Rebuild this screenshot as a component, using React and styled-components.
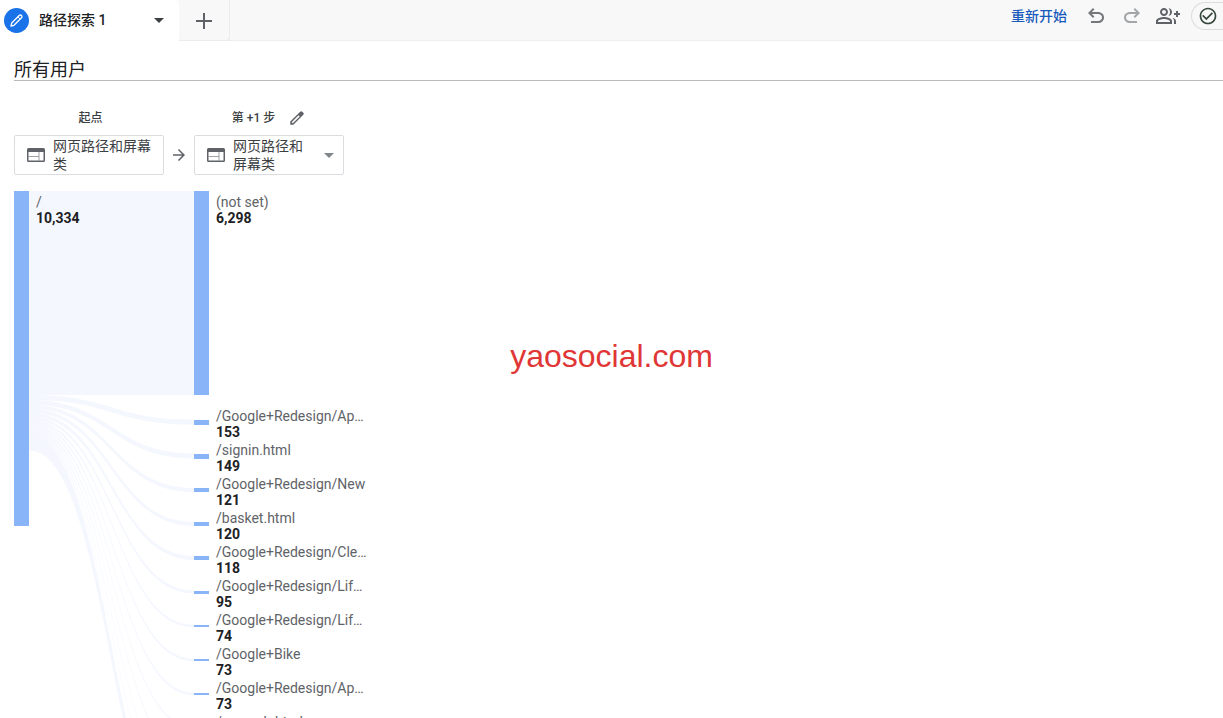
import styled, { createGlobalStyle } from 'styled-components'

const colors = {
  text: '#202124',
  secondary: '#5f6368',
  bar: '#8ab4f8',
  flow: '#f4f7fe',
  link: '#185abc',
  primary: '#1a73e8',
  border: '#dadce0',
  header: '#f8f8f9',
}

const steps = [
  { path: '/Google+Redesign/Ap…', value: 153 },
  { path: '/signin.html', value: 149 },
  { path: '/Google+Redesign/New', value: 121 },
  { path: '/basket.html', value: 120 },
  { path: '/Google+Redesign/Cle…', value: 118 },
  { path: '/Google+Redesign/Lif…', value: 95 },
  { path: '/Google+Redesign/Lif…', value: 74 },
  { path: '/Google+Bike', value: 73 },
  { path: '/Google+Redesign/Ap…', value: 73 },
  { path: '/asearch.html', value: 68 },
]

// users of the steps that follow the labelled ones, the last is the remainder
const moreSteps = [66, 64, 62, 480]

const START = 10334
const FIRST = 6298
const PX_PER_USER = 204 / FIRST
const ROW = 34
const GAP = 10
const LINK_WIDTH = 165

const GlobalStyle = createGlobalStyle`
  * {
    box-sizing: border-box;
  }
  body {
    margin: 0;
    background: #ffffff;
    color: ${colors.text};
    font-family: Roboto, 'Noto Sans CJK SC', sans-serif;
    font-size: 14px;
  }
`

const Page = styled.div`
  position: relative;
  display: flex;
  flex-direction: column;
  height: 100vh;
  overflow: hidden;
`

const BaseButton = styled.button`
  display: flex;
  align-items: center;
  padding: 0;
  border: none;
  background: none;
  color: inherit;
  font: inherit;
  cursor: pointer;
`

const Header = styled.header`
  display: flex;
  flex: none;
  height: 41px;
  background: ${colors.header};
  border-bottom: 1px solid #eeeeef;
`

const Tab = styled(BaseButton)`
  width: 179px;
  height: 41px;
  padding: 0 15px 0 4px;
  background: #ffffff;
  border-radius: 0 4px 0 0;
`

const TabBadge = styled.span`
  display: flex;
  align-items: center;
  justify-content: center;
  width: 25px;
  height: 25px;
  margin-right: 10px;
  border-radius: 50%;
  background: ${colors.primary};
`

const TabName = styled.span`
  flex: 1;
  padding-bottom: 3px;
  text-align: left;
  font-weight: 500;
`

const AddTab = styled(BaseButton)`
  justify-content: center;
  width: 51px;
  height: 41px;
  border-radius: 0 0 4px 4px;
  box-shadow: inset -1px -1px 0 #ececee;
`

const Actions = styled.div`
  display: flex;
  align-items: center;
  gap: 12px;
  height: 32px;
  margin-left: auto;
`

const Restart = styled(BaseButton)`
  margin-right: 5px;
  padding-bottom: 2px;
  color: ${colors.link};
  font-weight: 500;
`

const IconButton = styled(BaseButton)`
  justify-content: center;
  width: 24px;
  height: 24px;
`

const Status = styled(BaseButton)`
  width: 32px;
  height: 28px;
  margin-left: -1px;
  padding-left: 6px;
  border: 1px solid ${colors.border};
  border-right: none;
  border-radius: 14px 0 0 14px;
`

const Segment = styled.h1`
  flex: none;
  margin: 18px 0 0 14px;
  border-bottom: 1px solid #b9b9b9;
  font-size: 18px;
  font-weight: 400;
  line-height: 21px;
`

const Steps = styled.div`
  display: grid;
  flex: none;
  grid-template-columns: 150px 30px 150px;
  grid-template-rows: 24px 40px;
  row-gap: 5px;
  align-items: center;
  justify-items: center;
  margin: 25px 0 16px 14px;
`

const StepTitle = styled.div`
  display: flex;
  gap: 10px;
  grid-column: ${({ $column }) => $column};
  height: 24px;
  padding-left: 3px;
  color: #3c4043;
  font-size: 12px;
  font-weight: 500;
  line-height: 24px;
`

const StepSelect = styled(BaseButton)`
  gap: 8px;
  width: 150px;
  height: 40px;
  padding: 0 9px 0 12px;
  border: 1px solid ${colors.border};
  border-radius: 2px;
  text-align: left;
  line-height: 18px;
`

const StepName = styled.span`
  flex: 1;
  padding-right: ${({ $open }) => ($open ? '8px' : '0')};
  color: #3c4043;
`

const Chart = styled.section`
  display: flex;
  flex: 1;
  align-items: flex-start;
  min-height: 0;
  margin-left: 14px;
  overflow: hidden;
`

const Bar = styled.div`
  flex: none;
  width: 15px;
  background: ${colors.bar};
`

const Links = styled.div`
  position: relative;
  flex: none;
  width: ${LINK_WIDTH}px;
`

const StartLabel = styled.div`
  position: absolute;
  top: 3px;
  left: 7px;
`

const Nodes = styled.ul`
  display: flex;
  flex-direction: column;
  flex: 1;
  margin: 0;
  padding: 0;
  list-style: none;
`

const Node = styled.li`
  display: flex;
  flex: none;
  align-items: center;
  gap: 7px;
  height: ${ROW}px;
`

const FirstNode = styled(Node)`
  align-items: flex-start;
  height: auto;
  margin-bottom: ${GAP}px;
`

const Label = styled.div`
  padding-top: 3px;
`

const Path = styled.div`
  color: ${colors.secondary};
  line-height: 16px;
  white-space: nowrap;
`

const Value = styled.div`
  font-weight: 700;
  line-height: 16px;
`

const Watermark = styled.div`
  position: absolute;
  top: 50%;
  left: 50%;
  padding-bottom: 6px;
  transform: translate(-50%, -50%);
  color: #e03636;
  font-family: 'Liberation Sans', Arial, sans-serif;
  font-size: 32px;
  line-height: 36px;
`

function Icon({ size = 24, color = colors.secondary, children }) {
  return (
    <svg width={size} height={size} viewBox="0 0 24 24" fill={color} aria-hidden="true">
      {children}
    </svg>
  )
}

function Caret({ color }) {
  return (
    <svg width="10" height="5" viewBox="0 0 10 5" fill={color} aria-hidden="true">
      <path d="M0 0h10L5 5z" />
    </svg>
  )
}

function EditIcon() {
  return (
    <Icon size={18}>
      <path d="M20.41 4.94l-1.35-1.35a2 2 0 0 0-2.83 0L3 16.82V21h4.18L20.41 7.77a2 2 0 0 0 0-2.83zM6.41 19.06l-1.47-1.47L14.11 8.4l1.49 1.49-9.19 9.17z" />
    </Icon>
  )
}

function BadgePencil() {
  return (
    <svg width="13" height="13" viewBox="0 0 13 13" fill="none" stroke="#ffffff" aria-hidden="true">
      <path strokeWidth="1.3" strokeLinejoin="round" d="M1 12l.7-3 7.500-7.500a1.600 1.600 0 0 1 2.300 2.300L4 11.300z" />
      <path strokeWidth="1" d="M8 3l2 2" />
    </svg>
  )
}

function WebIcon() {
  return (
    <svg width="18" height="14" viewBox="0 0 18 14" fill={colors.secondary} aria-hidden="true">
      <path
        fillRule="evenodd"
        d="M1.500 0h15A1.500 1.500 0 0 1 18 1.500v11a1.500 1.500 0 0 1-1.500 1.500h-15A1.500 1.500 0 0 1 0 12.500v-11A1.500 1.500 0 0 1 1.500 0zM1.500 4v8.500h15V4z"
      />
      <path opacity="0.6" d="M1.500 8h10v1h-10zM11.500 4h1v8.500h-1z" />
    </svg>
  )
}

function ribbon(sourceTop, targetTop, size) {
  const middle = LINK_WIDTH / 2
  return [
    `M0 ${sourceTop}`,
    `C${middle} ${sourceTop} ${middle} ${targetTop} ${LINK_WIDTH} ${targetTop}`,
    `V${targetTop + size}`,
    `C${middle} ${targetTop + size} ${middle} ${sourceTop + size} 0 ${sourceTop + size}`,
    'Z',
  ].join(' ')
}

function getRibbons(values) {
  const firstSize = FIRST * PX_PER_USER
  const ribbons = [ribbon(0, 0, firstSize)]
  let sourceTop = firstSize
  values.forEach((value, index) => {
    const size = value * PX_PER_USER
    const center = firstSize + GAP + ROW * (index + 0.5)
    ribbons.push(ribbon(sourceTop, center - size / 2, size))
    sourceTop += size
  })
  return ribbons
}

function barHeight(value) {
  return Math.round(value * PX_PER_USER)
}

function App() {
  const values = [...steps.map(({ value }) => value), ...moreSteps]
  const chartHeight = barHeight(FIRST) + GAP + ROW * values.length

  return (
    <Page>
      <GlobalStyle />
      <Header>
        <Tab>
          <TabBadge>
            <BadgePencil />
          </TabBadge>
          <TabName>路径探索 1</TabName>
          <Caret color="#3c4043" />
        </Tab>
        <AddTab aria-label="添加标签页">
          <svg width="17" height="17" viewBox="0 0 17 17" fill={colors.secondary} aria-hidden="true">
            <path d="M7 1h2v7h7v2H9v7H7v-7H0V8h7z" />
          </svg>
        </AddTab>
        <Actions>
          <Restart>重新开始</Restart>
          <IconButton aria-label="撤消">
            <Icon color="#75787b">
              <path d="M7 19v-2h7.1c1.05 0 1.963-.333 2.738-1S18 14.5 18 13.5s-.387-1.833-1.162-2.5S15.15 10 14.1 10H7.8l2.6 2.6L9 14 4 9l5-5 1.4 1.4L7.8 8h6.3c1.617 0 3.004.525 4.162 1.575S20 11.933 20 13.5s-.58 2.875-1.738 3.925S15.717 19 14.1 19H7z" />
            </Icon>
          </IconButton>
          <IconButton aria-label="重做" disabled>
            <Icon color="#a3a6a9">
              <path d="M17 19v-2H9.9c-1.05 0-1.963-.333-2.738-1S6 14.5 6 13.5 6.387 11.667 7.162 11 8.85 10 9.9 10h6.3l-2.6 2.6L15 14l5-5-5-5-1.4 1.4L16.2 8H9.9c-1.617 0-3.004.525-4.162 1.575S4 11.933 4 13.5s.58 2.875 1.738 3.925S8.283 19 9.9 19H17z" />
            </Icon>
          </IconButton>
          <IconButton aria-label="共享">
            <Icon>
              <path d="M22 9V7h-2v2h-2v2h2v2h2v-2h2V9zM8 12c2.210 0 4-1.790 4-4s-1.790-4-4-4-4 1.790-4 4 1.790 4 4 4zm0-6c1.100 0 2 .9 2 2s-.9 2-2 2-2-.9-2-2 .9-2 2-2zM8 13c-2.670 0-8 1.340-8 4v3h16v-3c0-2.660-5.330-4-8-4zm6 5H2v-.99C2.200 16.290 5.300 15 8 15s5.800 1.290 6 2v1zM12.510 4.050C13.430 5.110 14 6.490 14 8s-.57 2.890-1.490 3.950C14.470 11.700 16 10.040 16 8s-1.530-3.700-3.490-3.950zM16.530 13.830C17.420 14.660 18 15.700 18 17v3h2v-3c0-1.450-1.590-2.510-3.470-3.170z" />
            </Icon>
          </IconButton>
          <Status aria-label="状态">
            <Icon size={20} color="#37483c">
              <path d="M16.590 7.580 10 14.170l-3.590-3.580L5 12l5 5 8-8zM12 2C6.480 2 2 6.480 2 12s4.480 10 10 10 10-4.480 10-10S17.520 2 12 2zm0 18c-4.420 0-8-3.580-8-8s3.580-8 8-8 8 3.580 8 8-3.580 8-8 8z" />
            </Icon>
          </Status>
        </Actions>
      </Header>

      <Segment>所有用户</Segment>

      <Steps>
        <StepTitle $column={1}>起点</StepTitle>
        <StepTitle $column={3}>
          第 +1 步
          <IconButton aria-label="修改步骤名称">
            <EditIcon />
          </IconButton>
        </StepTitle>
        <StepSelect>
          <WebIcon />
          <StepName>网页路径和屏幕类</StepName>
        </StepSelect>
        <Icon size={18}>
          <path d="M12 4l-1.410 1.410L16.170 11H4v2h12.170l-5.580 5.590L12 20l8-8z" />
        </Icon>
        <StepSelect aria-haspopup="listbox">
          <WebIcon />
          <StepName $open>网页路径和屏幕类</StepName>
          <Caret color="#80868b" />
        </StepSelect>
      </Steps>

      <Chart>
        <Bar style={{ height: barHeight(START) }} />
        <Links>
          <svg width={LINK_WIDTH} height={chartHeight} fill={colors.flow} aria-hidden="true">
            {getRibbons(values).map((d) => (
              <path key={d} d={d} />
            ))}
          </svg>
          <StartLabel>
            <Path>/</Path>
            <Value>{START.toLocaleString('en-US')}</Value>
          </StartLabel>
        </Links>
        <Nodes>
          <FirstNode>
            <Bar style={{ height: barHeight(FIRST) }} />
            <Label>
              <Path>(not set)</Path>
              <Value>{FIRST.toLocaleString('en-US')}</Value>
            </Label>
          </FirstNode>
          {steps.map(({ path, value }, index) => (
            <Node key={index}>
              <Bar style={{ height: barHeight(value) }} />
              <Label>
                <Path>{path}</Path>
                <Value>{value}</Value>
              </Label>
            </Node>
          ))}
        </Nodes>
      </Chart>

      <Watermark>yaosocial.com</Watermark>
    </Page>
  )
}

export default App
